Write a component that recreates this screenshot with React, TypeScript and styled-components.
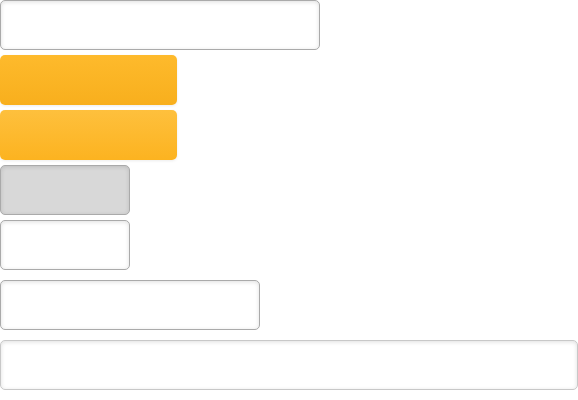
import React from "react";
import styled, { createGlobalStyle } from "styled-components";

const Global = createGlobalStyle`
  html, body { margin: 0; padding: 0; background: #fff; font-family: "Liberation Sans", Arial, sans-serif; }
`;

const Stack = styled.div`
  display: flex;
  flex-direction: column;
  align-items: flex-start;
  gap: 5px;
`;

const Group = styled.div`
  display: flex;
  flex-direction: column;
  align-items: flex-start;
  gap: 10px;
  margin-top: 5px;
  width: 100%;
`;

const Field = styled.div<{ $w: number | string; $gray?: boolean; $light?: boolean }>`
  box-sizing: border-box;
  width: ${(p) => (typeof p.$w === "number" ? `${p.$w}px` : p.$w)};
  height: 50px;
  border: 1px solid ${(p) => (p.$light ? "#c8c8c8" : "#aaaaaa")};
  border-radius: 5px;
  background: ${(p) => (p.$gray ? "#d8d8d8" : "#ffffff")};
  box-shadow: inset 0 1px 4px rgba(0, 0, 0, 0.13);
`;

const OrangeButton = styled.div<{ $variant?: "hover" }>`
  box-sizing: border-box;
  width: 177px;
  height: 50px;
  border-radius: 5px;
  background: ${(p) =>
    p.$variant === "hover"
      ? "linear-gradient(to bottom, #fec03d, #fcb320)"
      : "linear-gradient(to bottom, #feba2c, #f8af1d)"};
  box-shadow: 0 1px 3px rgba(0, 0, 0, 0.08);
`;

export default function App() {
  return (
    <>
      <Global />
      <Stack>
        <Field $w={320} />
        <OrangeButton />
        <OrangeButton $variant="hover" />
        <Field $w={130} $gray />
        <Field $w={130} />
        <Group>
          <Field $w={260} />
          <Field $w="100%" $light />
        </Group>
      </Stack>
    </>
  );
}
